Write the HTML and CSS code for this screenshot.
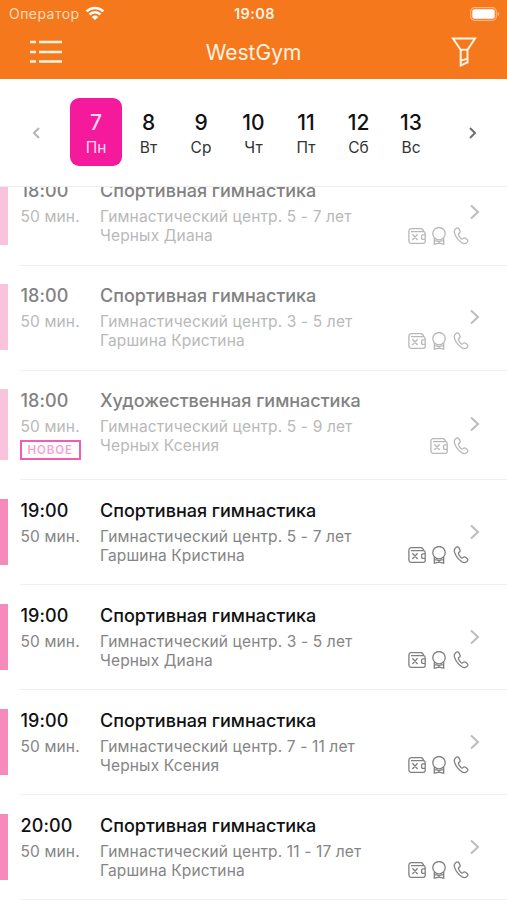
FILE: index.html
```html
<!DOCTYPE html>
<html lang="ru">
<head>
  <meta charset="UTF-8" />
  <meta name="viewport" content="width=device-width, initial-scale=1" />
  <title>WestGym</title>
  <link rel="stylesheet" href="styles.css">
</head>
<body>

<svg class="sprite">
  <symbol id="wallet" viewBox="0 0 18 18">
    <path d="M15.400 4.600V3.600L13.700 1.700H3.100A2.200 2.200 0 0 0 .9 3.900v10.200a2.200 2.200 0 0 0 2.200 2.200h12.400a1.700 1.700 0 0 0 1.700-1.700v-2.200M3 4.600h12.400a1.700 1.700 0 0 1 1.700 1.700v1.500M17.200 7.800h-2.400a1.200 1.200 0 0 0-1.200 1.200v2.200a1.200 1.200 0 0 0 1.200 1.200h2.400zM4.400 7.300l5.200 5.700M9.600 7.300 4.400 13" />
  </symbol>
  <symbol id="medal" viewBox="0 0 16 18">
    <circle cx="8" cy="6.700" r="6.200" />
    <path d="M3.300 10.900v6.300L8 16.200l4.700 1v-6.300M3.300 13.800H6l2 1 2-1h2.700" />
  </symbol>
  <symbol id="phone" viewBox="0 0 16 18">
    <path d="M2.500 1.900C3.900.6 5.200.7 6 1.900l.9 1.900c.6 1.200.2 2-.8 2.600-.8.500-.9 1-.5 1.900.7 1.300 1.500 2.400 2.600 3.400.7.600 1.200.5 1.800-.1.800-.8 1.600-1 2.600-.3l1.500 1.200c1.200 1 1 2.100-.2 3.100-1.500 1.300-3.300 1.300-5.100.1C5.400 13.400 3 10.400 1.700 6.600.9 4.700 1.100 3.200 2.500 1.900z" />
  </symbol>
  <symbol id="arrow" viewBox="0 0 11 16">
    <path d="M2 1.500 9 8l-7 6.500" />
  </symbol>
</svg>

<header>
  <div class="status">
    <div class="operator">
      <span>Оператор</span>
      <svg class="wifi" viewBox="0 0 20 15">
        <path d="M1.600 5.400a12 12 0 0 1 16.800 0M4.600 8.500a7.700 7.700 0 0 1 10.800 0" />
        <path class="dot" d="M10 14 6.800 10.900a4.600 4.600 0 0 1 6.400 0z" />
      </svg>
    </div>
    <span class="clock">19:08</span>
    <svg class="battery" viewBox="0 0 30 14">
      <rect class="shell" x="0.700" y="0.700" width="25.600" height="12.600" rx="3.800" />
      <rect class="charge" x="2.300" y="2.300" width="22.400" height="9.400" rx="2.200" />
      <path class="shell-tip" d="M27.700 4.700c2 .8 2 3.800 0 4.600z" />
    </svg>
  </div>
  <div class="navbar">
    <svg class="menu" viewBox="0 0 32 24">
      <path d="M0 2h6M9 2h23M0 12h6M9 12h23M0 21.500h6M9 21.500h23" />
    </svg>
    <h1>WestGym</h1>
    <svg class="filter" viewBox="0 0 26 30">
      <path d="M2 1.500h22l-7.500 11.300H9.700zM9.700 12.800v15.700l6.800-3.100V12.800M9.700 23.800l6.800-2.200" />
    </svg>
  </div>
</header>

<nav class="week">
  <svg class="prev" viewBox="0 0 8 12"><path d="M7 1 2 6l5 5" /></svg>
  <div class="days">
    <div class="day active"><b>7</b><span>Пн</span></div>
    <div class="day"><b>8</b><span>Вт</span></div>
    <div class="day"><b>9</b><span>Ср</span></div>
    <div class="day"><b>10</b><span>Чт</span></div>
    <div class="day"><b>11</b><span>Пт</span></div>
    <div class="day"><b>12</b><span>Сб</span></div>
    <div class="day"><b>13</b><span>Вс</span></div>
  </div>
  <svg class="next" viewBox="0 0 8 12"><path d="M1 1l5 5-5 5" /></svg>
</nav>

<main>
  <div class="list">

    <div class="lesson past">
      <div class="time"><b>18:00</b><span>50 мин.</span></div>
      <div class="info">
        <h2>Спортивная гимнастика</h2>
        <p>Гимнастический центр. 5 - 7 лет</p>
        <div class="coach">
          <span>Черных Диана</span>
          <div class="icons">
            <svg class="w18"><use href="#wallet" /></svg>
            <svg><use href="#medal" /></svg>
            <svg><use href="#phone" /></svg>
          </div>
        </div>
      </div>
      <svg class="arrow"><use href="#arrow" /></svg>
    </div>

    <div class="lesson past">
      <div class="time"><b>18:00</b><span>50 мин.</span></div>
      <div class="info">
        <h2>Спортивная гимнастика</h2>
        <p>Гимнастический центр. 3 - 5 лет</p>
        <div class="coach">
          <span>Гаршина Кристина</span>
          <div class="icons">
            <svg class="w18"><use href="#wallet" /></svg>
            <svg><use href="#medal" /></svg>
            <svg><use href="#phone" /></svg>
          </div>
        </div>
      </div>
      <svg class="arrow"><use href="#arrow" /></svg>
    </div>

    <div class="lesson past">
      <div class="time"><b>18:00</b><span>50 мин.</span><em>НОВОЕ</em></div>
      <div class="info">
        <h2>Художественная гимнастика</h2>
        <p>Гимнастический центр. 5 - 9 лет</p>
        <div class="coach">
          <span>Черных Ксения</span>
          <div class="icons">
            <svg class="w18"><use href="#wallet" /></svg>
            <svg><use href="#phone" /></svg>
          </div>
        </div>
      </div>
      <svg class="arrow"><use href="#arrow" /></svg>
    </div>

    <div class="lesson">
      <div class="time"><b>19:00</b><span>50 мин.</span></div>
      <div class="info">
        <h2>Спортивная гимнастика</h2>
        <p>Гимнастический центр. 5 - 7 лет</p>
        <div class="coach">
          <span>Гаршина Кристина</span>
          <div class="icons">
            <svg class="w18"><use href="#wallet" /></svg>
            <svg><use href="#medal" /></svg>
            <svg><use href="#phone" /></svg>
          </div>
        </div>
      </div>
      <svg class="arrow"><use href="#arrow" /></svg>
    </div>

    <div class="lesson">
      <div class="time"><b>19:00</b><span>50 мин.</span></div>
      <div class="info">
        <h2>Спортивная гимнастика</h2>
        <p>Гимнастический центр. 3 - 5 лет</p>
        <div class="coach">
          <span>Черных Диана</span>
          <div class="icons">
            <svg class="w18"><use href="#wallet" /></svg>
            <svg><use href="#medal" /></svg>
            <svg><use href="#phone" /></svg>
          </div>
        </div>
      </div>
      <svg class="arrow"><use href="#arrow" /></svg>
    </div>

    <div class="lesson">
      <div class="time"><b>19:00</b><span>50 мин.</span></div>
      <div class="info">
        <h2>Спортивная гимнастика</h2>
        <p>Гимнастический центр. 7 - 11 лет</p>
        <div class="coach">
          <span>Черных Ксения</span>
          <div class="icons">
            <svg class="w18"><use href="#wallet" /></svg>
            <svg><use href="#medal" /></svg>
            <svg><use href="#phone" /></svg>
          </div>
        </div>
      </div>
      <svg class="arrow"><use href="#arrow" /></svg>
    </div>

    <div class="lesson">
      <div class="time"><b>20:00</b><span>50 мин.</span></div>
      <div class="info">
        <h2>Спортивная гимнастика</h2>
        <p>Гимнастический центр. 11 - 17 лет</p>
        <div class="coach">
          <span>Гаршина Кристина</span>
          <div class="icons">
            <svg class="w18"><use href="#wallet" /></svg>
            <svg><use href="#medal" /></svg>
            <svg><use href="#phone" /></svg>
          </div>
        </div>
      </div>
      <svg class="arrow"><use href="#arrow" /></svg>
    </div>

  </div>
</main>

</body>
</html>
```
FILE: styles.css
```css
* {
  box-sizing: border-box;
}
body {
  margin: 0;
  height: 900px;
  display: flex;
  flex-direction: column;
  overflow: hidden;
  background: #fff;
  color: #111;
  font-family: Inter, "Liberation Sans", sans-serif;
}
svg {
  display: block;
  fill: none;
  stroke: currentColor;
}
.sprite {
  display: none;
}

/* header */
header {
  flex: none;
  height: 79px;
  background: #f6781d;
  color: #fff3e4;
}
.status {
  display: grid;
  grid-template-columns: 1fr auto 1fr;
  align-items: center;
  height: 27px;
  padding: 0 7px 0 9px;
}
.operator {
  display: flex;
  align-items: center;
  gap: 5px;
  font-size: 14px;
  letter-spacing: 0.45px;
  color: #ffdcb8;
}
.wifi {
  width: 20px;
  height: 15px;
  stroke-width: 2.6;
  color: #fff;
}
.wifi .dot {
  fill: #fff;
  stroke: none;
}
.clock {
  font-size: 14.5px;
  font-weight: 600;
  letter-spacing: 0.4px;
}
.battery {
  width: 30px;
  height: 14px;
  justify-self: end;
}
.shell {
  stroke: #fbb584;
  stroke-width: 1.2;
}
.charge {
  fill: #fff;
  stroke: none;
}
.shell-tip {
  fill: #fbb584;
  stroke: none;
}
.navbar {
  display: grid;
  grid-template-columns: 1fr auto 1fr;
  align-items: center;
  height: 50px;
  padding: 0 30px;
}
.menu {
  width: 32px;
  height: 24px;
  stroke-width: 2.4;
}
h1 {
  margin: 0;
  font-size: 21px;
  font-weight: 400;
}
.filter {
  width: 26px;
  height: 30px;
  justify-self: end;
  stroke-width: 2;
}

/* week */
.week {
  flex: none;
  display: flex;
  align-items: center;
  justify-content: space-between;
  height: 108px;
  padding: 0 31px 1px;
  border-bottom: 1px solid #ededed;
}
.prev, .next {
  width: 8px;
  height: 12px;
  margin: 2px -1px 0 1px;
  stroke-width: 2;
  color: #b5b5b5;
}
.next {
  color: #6e6e6e;
}
.days {
  display: flex;
}
.day {
  display: flex;
  flex-direction: column;
  align-items: center;
  width: 52.5px;
  height: 68px;
  padding-top: 12px;
  border-radius: 9px;
}
.day b {
  font-size: 21px;
  line-height: 26px;
  font-weight: 500;
}
.day span {
  font-size: 15.5px;
  line-height: 24px;
  color: #333;
}
.day.active, .day.active span {
  background: #f5199c;
  color: #ffd9ef;
}

/* lessons */
main {
  flex: 1;
  min-height: 0;
  overflow: hidden;
}
.list {
  margin-top: -27.4px;
}
.lesson {
  display: flex;
  padding: 19.5px 27px 19.5px 0;
  /* separator starts after the colour strip */
  background: linear-gradient(#efefef, #efefef) 20px 0 / 100% 1px no-repeat;
}
.list::after {
  content: "";
  display: block;
  height: 1px;
  margin-left: 20px;
  background: #efefef;
}
.time {
  flex: none;
  display: flex;
  flex-direction: column;
  align-items: flex-start;
  width: 100px;
  min-height: 66px;
  padding-left: 12.5px;
  border-left: 8px solid #f48bbb;
}
.time b, h2 {
  margin: 0;
  font-size: 18px;
  line-height: 23.5px;
  font-weight: 500;
}
.time b {
  letter-spacing: 0.1px;
}
.time span, p, .coach {
  margin: 0;
  font-size: 15.5px;
  line-height: 19px;
  letter-spacing: 0.14px;
  color: #858585;
}
.time span, p {
  margin-top: 4.5px;
}
.time em {
  height: 20px;
  margin: 3.5px 0 0 -1px;
  padding: 0 6px;
  border: 2px solid #f45cb4;
  font-size: 11.5px;
  line-height: 17px;
  font-style: normal;
  font-weight: 600;
  letter-spacing: 0.9px;
  color: #f89fd2;
}
.info {
  flex: 1;
}
.coach {
  display: flex;
  justify-content: space-between;
  align-items: center;
}
.icons {
  display: flex;
  gap: 6px;
  color: #808080;
}
.icons svg {
  width: 16px;
  height: 18px;
  stroke-width: 1.3;
}
.icons .w18 {
  width: 18px;
  margin-right: -1px;
}
.arrow {
  align-self: center;
  width: 11px;
  height: 16px;
  stroke-width: 2;
  color: #bdbdbd;
}
.past .time {
  border-color: #f9c3dc;
}
.past b, .past h2 {
  color: #828282;
}
.past .time span, .past p, .past .coach {
  color: #b9b9b9;
}
.past .coach .icons {
  color: #b8b8b8;
}
```
